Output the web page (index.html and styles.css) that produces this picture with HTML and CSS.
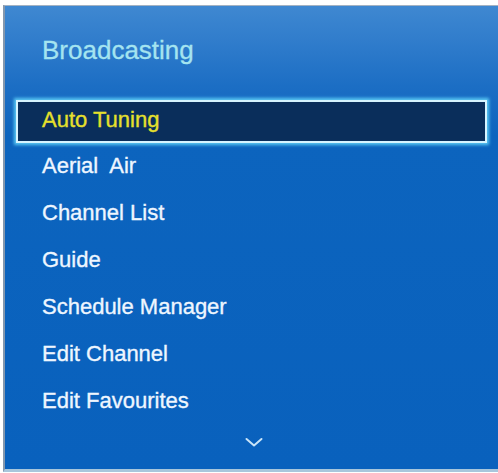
FILE: index.html
```html
<!DOCTYPE html>
<html>
<head>
<meta charset="utf-8">
<link rel="stylesheet" href="styles.css">
</head>
<body>
<div class="panel">
  <div class="title">Broadcasting</div>
  <ul class="menu">
    <li class="item selected">Auto Tuning</li>
    <li class="item">Aerial&nbsp; Air</li>
    <li class="item">Channel List</li>
    <li class="item">Guide</li>
    <li class="item">Schedule Manager</li>
    <li class="item">Edit Channel</li>
    <li class="item">Edit Favourites</li>
  </ul>
  <div class="more">
    <svg width="18" height="11" viewBox="0 0 18 11"><path d="M1.5 2 L9 8.5 L16.5 2" fill="none" stroke="#c9e4f8" stroke-width="2" stroke-linecap="round" stroke-linejoin="round"/></svg>
  </div>
</div>
</body>
</html>
```
FILE: styles.css
```css
html, body {
  margin: 0;
  padding: 0;
  background: #ffffff;
}
body {
  width: 498px;
  height: 473px;
  overflow: hidden;
  font-family: "Liberation Sans", Arial, sans-serif;
}
.panel {
  margin: 5px 0 0 3px;
  height: 463px;
  border-left: 2px solid #8497ad;
  border-top: 1px solid #a3b2c2;
  border-bottom: 3px solid #a8c6dc;
  background: linear-gradient(180deg, #3f88d1 0px, #2e7bcb 40px, #1c6ec4 80px, #0c64be 130px, #0961bd 100%);
  box-sizing: content-box;
}
.title {
  padding: 29px 0 0 37px;
  height: 93px;
  box-sizing: border-box;
  font-size: 26px;
  line-height: 30px;
  color: #a4e4f0;
  -webkit-text-stroke: 0.3px #a4e4f0;
}
.menu {
  list-style: none;
  margin: 0 11px;
  padding: 0;
}
.item {
  height: 47px;
  line-height: 40px;
  padding: 0 0 7px 26px;
  box-sizing: border-box;
  font-size: 22px;
  color: #eef6ff;
  -webkit-text-stroke: 0.35px #eef6ff;
  white-space: nowrap;
}
.item.selected {
  height: 43px;
  margin: 1px 0 3px;
  line-height: 35px;
  padding: 0 0 4px 24px;
  background: #0a2e5b;
  border: 2px solid #d6f4ff;
  box-shadow: 0 0 3px 2px #59c8f4;
  color: #e6e02c;
  -webkit-text-stroke: 0.35px #e6e02c;
}
.more {
  display: flex;
  justify-content: center;
  padding: 9px 0 0 5px;
}
.more svg {
  display: block;
}
```
